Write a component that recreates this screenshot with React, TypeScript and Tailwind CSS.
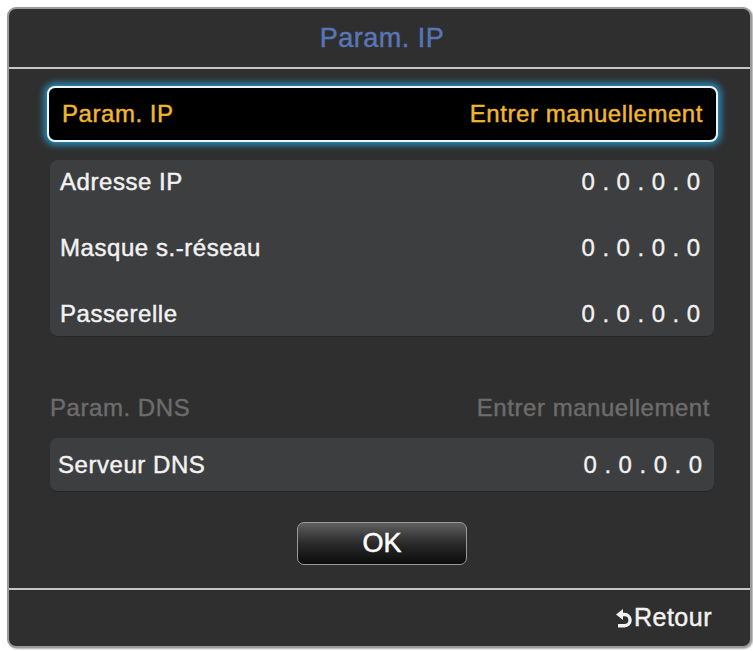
import React from 'react';

const font = { fontFamily: '"Liberation Sans", Arial, sans-serif' };

// medium-ish weight: regular face thickened a little
const txt = 'text-[24px] tracking-[0.55px] [-webkit-text-stroke:0.45px_currentColor]';

const IpValue: React.FC<{ value: string }> = ({ value }) => (
  <span className="tracking-[7.5px] -mr-[7.5px] text-[24px] text-[#f2f2f2] [-webkit-text-stroke:0.35px_currentColor]">{value}</span>
);

const BackIcon: React.FC = () => (
  <svg width="16" height="20" viewBox="0 0 16 20" className="mr-[2px] mt-[1px]">
    <polygon points="0,5.5 7,0 7,11" fill="#f2f2f2" />
    <path d="M6 5.5 H8.5 A5.6 5.6 0 0 1 8.5 16.7 H2" fill="none" stroke="#f2f2f2" strokeWidth="3.4" />
  </svg>
);

const App: React.FC = () => {
  const ipRows = [
    { label: 'Adresse IP', value: '0.0.0.0' },
    { label: 'Masque s.-réseau', value: '0.0.0.0' },
    { label: 'Passerelle', value: '0.0.0.0' },
  ];

  return (
    <div className="w-[753px] h-[651px] bg-white pt-[7px] pl-[7px]" style={font}>
      <div className="w-[745px] h-[641px] rounded-[9px] border-2 border-[#9a9a9a] bg-[#2f2f2f] flex flex-col shadow-[1px_1px_2px_rgba(0,0,0,0.35)]">
        {/* Header */}
        <div className="h-[60px] shrink-0 border-b-2 border-[#c6c6c6] flex items-center justify-center pl-[5px]">
          <span className="text-[27px] tracking-[0.5px] [-webkit-text-stroke:0.45px_currentColor] text-[#5876b6]">Param. IP</span>
        </div>

        {/* Content */}
        <div className="flex-1 pl-[41px] pr-[36px] flex flex-col">
          {/* Selected row */}
          <div className="mt-[17px] -ml-[3px] -mr-[4px] h-[56px] rounded-[8px] border-2 border-[#eef8fc] bg-black flex items-center justify-between px-[13px] shadow-[0_0_7px_3px_rgba(40,160,215,0.85)]">
            <span className={`${txt} text-[#f2b62e]`}>Param. IP</span>
            <span className={`${txt} text-[#f2b62e]`}>Entrer manuellement</span>
          </div>

          {/* IP group */}
          <div className="mt-[18px] h-[177px] rounded-[8px] bg-[#3d3e40] border-b border-[#262626] flex flex-col gap-[22px] pl-[10px] pr-[14px]">
            {ipRows.map((row) => (
              <div key={row.label} className="h-[44px] flex items-center justify-between">
                <span className={`${txt} text-[#f2f2f2]`}>{row.label}</span>
                <IpValue value={row.value} />
              </div>
            ))}
          </div>

          {/* DNS settings */}
          <div className="mt-[49px] h-[44px] flex items-center justify-between pr-[4px]">
            <span className={`${txt} text-[#6c6c6c]`}>Param. DNS</span>
            <span className={`${txt} text-[#6c6c6c]`}>Entrer manuellement</span>
          </div>

          <div className="mt-[8px] h-[54px] rounded-[8px] bg-[#3d3e40] border-b border-[#262626] flex items-center justify-between pl-[8px] pr-[12px]">
            <span className={`${txt} text-[#f2f2f2]`}>Serveur DNS</span>
            <IpValue value="0.0.0.0" />
          </div>

          {/* OK button */}
          <button className="mt-[30px] mx-auto w-[170px] h-[43px] rounded-[7px] border border-[#9a9a9a] bg-gradient-to-b from-[#606060] via-[#2a2a2a] to-[#0c0c0c] flex items-center justify-center">
            <span className="text-[27px] text-white [-webkit-text-stroke:0.5px_currentColor]">OK</span>
          </button>
        </div>

        {/* Footer */}
        <div className="h-[58px] shrink-0 border-t-2 border-[#c6c6c6] flex items-center justify-end pr-[38px]">
          <BackIcon />
          <span className="text-[25px] tracking-[0.5px] [-webkit-text-stroke:0.45px_currentColor] text-[#f2f2f2]">Retour</span>
        </div>
      </div>
    </div>
  );
};

export default App;
